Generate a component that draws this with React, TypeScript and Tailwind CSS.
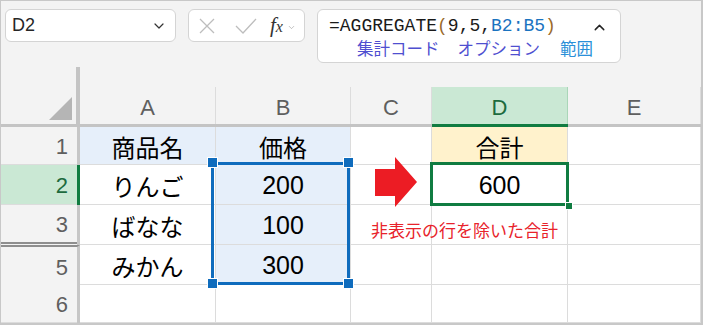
import React from 'react'
import { ChevronDown, ChevronUp } from 'lucide-react'

const ui = "font-['Liberation_Sans','Noto_Sans_CJK_JP',sans-serif]"
const jp = "font-['Noto_Sans_CJK_JP',sans-serif]"

const headers = [
  { label: 'A', w: 'w-[136px]', active: false },
  { label: 'B', w: 'w-[135px]', active: false },
  { label: 'C', w: 'w-[81px]', active: false },
  { label: 'D', w: 'w-[136px]', active: true },
  { label: 'E', w: 'w-[133px]', active: false },
]

type Cell = { text?: string; bg?: string; num?: boolean }

const rows: { n: string; h: string; cells: Cell[] }[] = [
  {
    n: '1',
    h: 'h-[38px]',
    cells: [
      { text: '商品名', bg: 'bg-[#e6effa]' },
      { text: '価格', bg: 'bg-[#e6effa]' },
      {},
      { text: '合計', bg: 'bg-[#fff2cc]' },
      {},
    ],
  },
  {
    n: '2',
    h: 'h-[40px]',
    cells: [{ text: 'りんご' }, { text: '200', bg: 'bg-[#e6effa]', num: true }, {}, { text: '600', num: true }, {}],
  },
  {
    n: '3',
    h: 'h-[40px]',
    cells: [{ text: 'ばなな' }, { text: '100', bg: 'bg-[#e6effa]', num: true }, {}, {}, {}],
  },
  {
    n: '5',
    h: 'h-[40px]',
    cells: [{ text: 'みかん' }, { text: '300', bg: 'bg-[#e6effa]', num: true }, {}, {}, {}],
  },
  { n: '6', h: 'h-[38px]', cells: [{}, {}, {}, {}, {}] },
]

const Handle = ({ pos }: { pos: string }) => (
  <div className={`absolute w-[11px] h-[11px] bg-[#0f6cbd] border border-white ${pos}`} />
)

const App: React.FC = () => {
  return (
    <div className={`relative w-[705px] h-[326px] bg-white overflow-hidden ${ui}`}>
      <div className="w-[703px] h-[325px] border-t border-l border-r-2 border-b-2 border-[#c8c8c8] bg-[#f3f3f3] flex flex-col">
        {/* toolbar */}
        <div className="h-[66px] flex items-start gap-[12px] pl-[4px] pt-[8px]">
          <div className="w-[171px] h-[33px] bg-white border border-[#d4d4d4] rounded-md flex items-center justify-between pl-[6px] pr-[8px]">
            <span className="text-[18px] text-[#262626]">D2</span>
            <ChevronDown size={16} strokeWidth={1.8} className="text-[#333]" />
          </div>
          <div className="w-[117px] h-[33px] bg-white border border-[#d4d4d4] rounded-md flex items-center pl-[9px] text-[#c2c2c2]">
            <svg width="18" height="18" viewBox="0 0 18 18">
              <path d="M2 2 L16 16 M16 2 L2 16" stroke="#bdbdbd" strokeWidth="1.3" fill="none" />
            </svg>
            <svg width="22" height="18" viewBox="0 0 22 18" className="ml-[19px]">
              <path d="M1 9 L8 16 L21 2" stroke="#bdbdbd" strokeWidth="1.3" fill="none" />
            </svg>
            <span className="ml-[13px] font-['Liberation_Serif',serif] italic text-[#333] text-[21px] leading-none">
              f<span className="text-[16px]">x</span>
            </span>
            <ChevronDown size={9} strokeWidth={1.6} className="ml-[4px] mt-[3px] text-[#9a9a9a]" />
          </div>
          <div className="w-[304px] h-[54px] bg-white border border-[#d4d4d4] rounded-md relative pl-[11px] pt-[4px]">
            <div className="font-['Liberation_Mono',monospace] text-[18px] leading-[24px] text-[#1a1a1a]">
              =AGGREGATE<span className="text-[#9a6a2a]">(</span>9,5,<span className="text-[#1a73c0]">B2:B5</span>
              <span className="text-[#9a6a2a]">)</span>
            </div>
            <div className={`${jp} text-[16.5px] leading-[20px] flex pl-[28px]`}>
              <span className="text-[#4f4fd0]">集計コード</span>
              <span className="ml-[18px] text-[#4f4fd0]">オプション</span>
              <span className="ml-[20px] text-[#2a8fd8]">範囲</span>
            </div>
            <ChevronUp size={17} strokeWidth={2} className="absolute right-[12px] top-[9px] text-[#222]" />
          </div>
        </div>

        {/* column headers */}
        <div className="flex h-[60px]">
          <div className="w-[79px] h-[60px] border-r-[4px] border-b-[3px] border-[#c4c4c4] flex items-end justify-end pr-[4px] pb-[4px]">
            <svg width="23" height="23" viewBox="0 0 23 23">
              <polygon points="23,0 23,23 0,23" fill="#b5b5b5" />
            </svg>
          </div>
          {headers.map((c) => (
            <div
              key={c.label}
              className={`${c.w} h-[60px] flex flex-col border-b-[3px] ${c.active ? 'border-b-[#107c41]' : 'border-b-[#c4c4c4]'}`}
            >
              <div className="h-[23px]" />
              <div
                className={`flex-1 flex items-center justify-center pt-[4px] text-[22px] border-r ${
                  c.active ? 'bg-[#cae8d4] text-[#1d6b3e] border-[#a9d6b8]' : 'text-[#5f5f5f] border-[#dcdcdc]'
                }`}
              >
                {c.label}
              </div>
            </div>
          ))}
        </div>

        {/* rows */}
        {rows.map((r) => (
          <div key={r.n} className={`flex ${r.h}`}>
            <div
              className={`w-[79px] flex flex-col ${
                r.n === '2'
                  ? 'bg-[#cae8d4] border-r-[3px] border-[#107c41]'
                  : 'border-r-[3px] border-[#c6c6c6]'
              } ${r.n === '5' ? 'border-t-2 border-t-[#8e8e8e]' : ''}`}
            >
              <div
                className={`flex-1 flex items-center justify-end pr-[9px] pt-[2px] text-[22px] ${
                  r.n === '2' ? 'text-[#1d6b3e]' : 'text-[#5f5f5f]'
                } ${r.n === '3' || r.n === '5' ? '' : 'border-b border-[#dcdcdc]'}`}
              >
                {r.n}
              </div>
              {r.n === '3' && <div className="h-[3px] border-t-2 border-[#8e8e8e]" />}
            </div>
            {r.cells.map((c, i) => (
              <div
                key={i}
                className={`${headers[i].w} border-r border-b border-[#dcdcdc] flex items-center justify-center pt-[2px] text-black ${
                  c.bg ?? 'bg-white'
                } ${c.num ? 'text-[25px]' : `${jp} text-[24px]`}`}
              >
                {c.text}
              </div>
            ))}
          </div>
        ))}
      </div>

      {/* selection B2:B5 */}
      <div className="absolute left-[211px] top-[162px] w-[139px] h-[123px] border-[3px] border-[#0f6cbd]" />
      <Handle pos="left-[207px] top-[157px]" />
      <Handle pos="left-[343px] top-[157px]" />
      <Handle pos="left-[207px] top-[278px]" />
      <Handle pos="left-[343px] top-[278px]" />

      {/* active cell D2 */}
      <div className="absolute left-[430px] top-[162px] w-[139px] h-[44px] border-[3px] border-[#107c41]" />
      <div className="absolute left-[565px] top-[202px] w-[8px] h-[8px] bg-[#107c41] border border-white" />

      {/* arrow */}
      <svg className="absolute left-[375px] top-[157px]" width="42" height="50" viewBox="0 0 42 50">
        <polygon points="0,12 20,12 20,0 42,25 20,50 20,39 0,39" fill="#ec1c24" />
      </svg>

      <div className={`absolute left-[371px] top-[219px] ${jp} text-[17px] leading-[22px] text-[#e8232b] whitespace-nowrap`}>
        非表示の行を除いた合計
      </div>
    </div>
  )
}

export default App
